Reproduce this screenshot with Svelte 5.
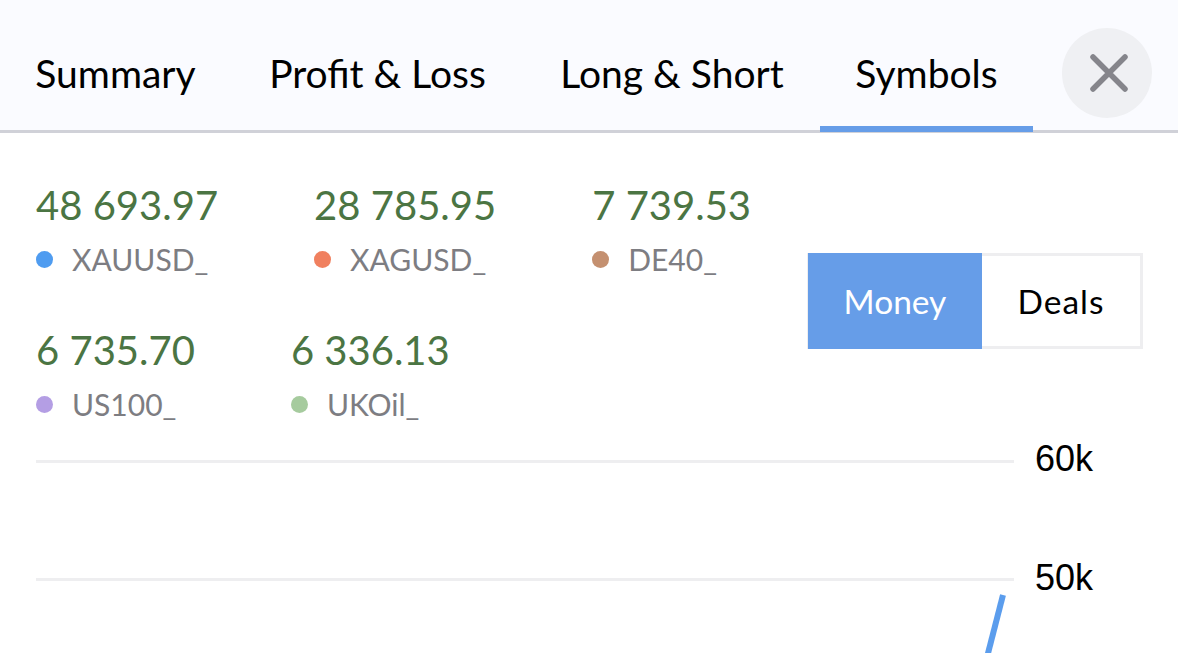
<script>
  const tabs = [
    { label: 'Summary', width: 231 },
    { label: 'Profit & Loss', width: 293 },
    { label: 'Long & Short', width: 296 },
    { label: 'Symbols', width: 213 }
  ];
  const symbols = [
    { value: '48 693.97', name: 'XAUUSD_', color: '#4f9cf0' },
    { value: '28 785.95', name: 'XAGUSD_', color: '#f0805f' },
    { value: '7 739.53', name: 'DE40_', color: '#c49070' },
    { value: '6 735.70', name: 'US100_', color: '#b49ee4' },
    { value: '6 336.13', name: 'UKOil_', color: '#a6cb9e' }
  ];
  let active = $state('Symbols');
  let mode = $state('Money');
</script>

<div class="panel">
  <header>
    <nav>
      {#each tabs as tab}
        <button class="tab" class:active={active === tab.label} style="width: {tab.width}px" onclick={() => (active = tab.label)}>{tab.label}</button>
      {/each}
    </nav>
    <button class="close" aria-label="Close">
      <svg width="38" height="38" viewBox="0 0 38 38">
        <path d="M3 3 L35 35 M35 3 L3 35" stroke="#85858b" stroke-width="5.5" stroke-linecap="round" />
      </svg>
    </button>
  </header>

  <section class="top">
    <div class="legend">
      {#each symbols as s}
        <div class="item">
          <div class="value">{s.value}</div>
          <div class="name"><span class="dot" style="background: {s.color}"></span>{s.name}</div>
        </div>
      {/each}
    </div>
    <div class="toggle">
      <button class:on={mode === 'Money'} onclick={() => (mode = 'Money')}>Money</button>
      <button class:on={mode === 'Deals'} onclick={() => (mode = 'Deals')}>Deals</button>
    </div>
  </section>

  <svg class="chart" width="1178" height="229" viewBox="0 0 1178 229">
    <line x1="36" x2="1014" y1="37.5" y2="37.5" stroke="#eeeef0" stroke-width="3" />
    <line x1="36" x2="1014" y1="155.5" y2="155.5" stroke="#eeeef0" stroke-width="3" />
    <text x="1035" y="47">60k</text>
    <text x="1035" y="166">50k</text>
    <line x1="1003" y1="171" x2="985" y2="241" stroke="#5b9ded" stroke-width="6" />
  </svg>
</div>

<style>
  :global(body) {
    margin: 0;
    background: #fff;
  }
  .panel {
    width: 1178px;
    height: 653px;
    overflow: hidden;
    font-family: "Lato", "Open Sans", sans-serif;
  }
  header {
    height: 130px;
    display: flex;
    align-items: center;
    background: #fafbff;
    border-bottom: 3px solid #d0d1d8;
  }
  nav {
    display: flex;
    height: 133px;
  }
  button {
    font: inherit;
    background: none;
    border: none;
    padding: 0;
    cursor: pointer;
  }
  .tab {
    height: 133px;
    font-size: 39px;
    color: #000;
    border-bottom: 6px solid transparent;
    padding-top: 21px;
    white-space: nowrap;
  }
  .tab.active {
    border-bottom-color: #669de8;
  }
  .close {
    width: 90px;
    height: 90px;
    border-radius: 50%;
    background: #eff0f3;
    margin-left: 29px;
    margin-top: 16px;
    display: flex;
    align-items: center;
    justify-content: center;
  }
  .close svg {
    margin-left: 3px;
  }
  .top {
    display: flex;
    align-items: center;
    justify-content: space-between;
    padding: 49px 35px 0 36px;
  }
  .legend {
    display: flex;
    flex-wrap: wrap;
    column-gap: 96px;
    row-gap: 48px;
    width: 770px;
  }
  .value {
    font-size: 40px;
    line-height: 46px;
    color: #4b7543;
  }
  .name {
    display: flex;
    align-items: center;
    margin-top: 11px;
    font-size: 30px;
    line-height: 40px;
    color: #7d7d82;
  }
  .dot {
    width: 17px;
    height: 17px;
    border-radius: 50%;
    margin-right: 19px;
  }
  .toggle {
    display: flex;
    width: 336px;
    height: 96px;
    box-sizing: border-box;
    border: 3px solid #eeeef0;
    margin-bottom: 4px;
  }
  .toggle button {
    font-size: 33.5px;
    color: #000;
  }
  .toggle button:first-child {
    width: 174px;
    margin: -3px 0 -3px -2px;
  }
  .toggle button:last-child {
    flex: 1;
    letter-spacing: 1px;
  }
  .toggle button.on {
    background: #669de8;
    color: #fff;
  }
  .chart {
    display: block;
  }
  .chart text {
    font-family: "Liberation Sans", Arial, sans-serif;
    font-size: 36px;
    fill: #000;
  }
</style>
